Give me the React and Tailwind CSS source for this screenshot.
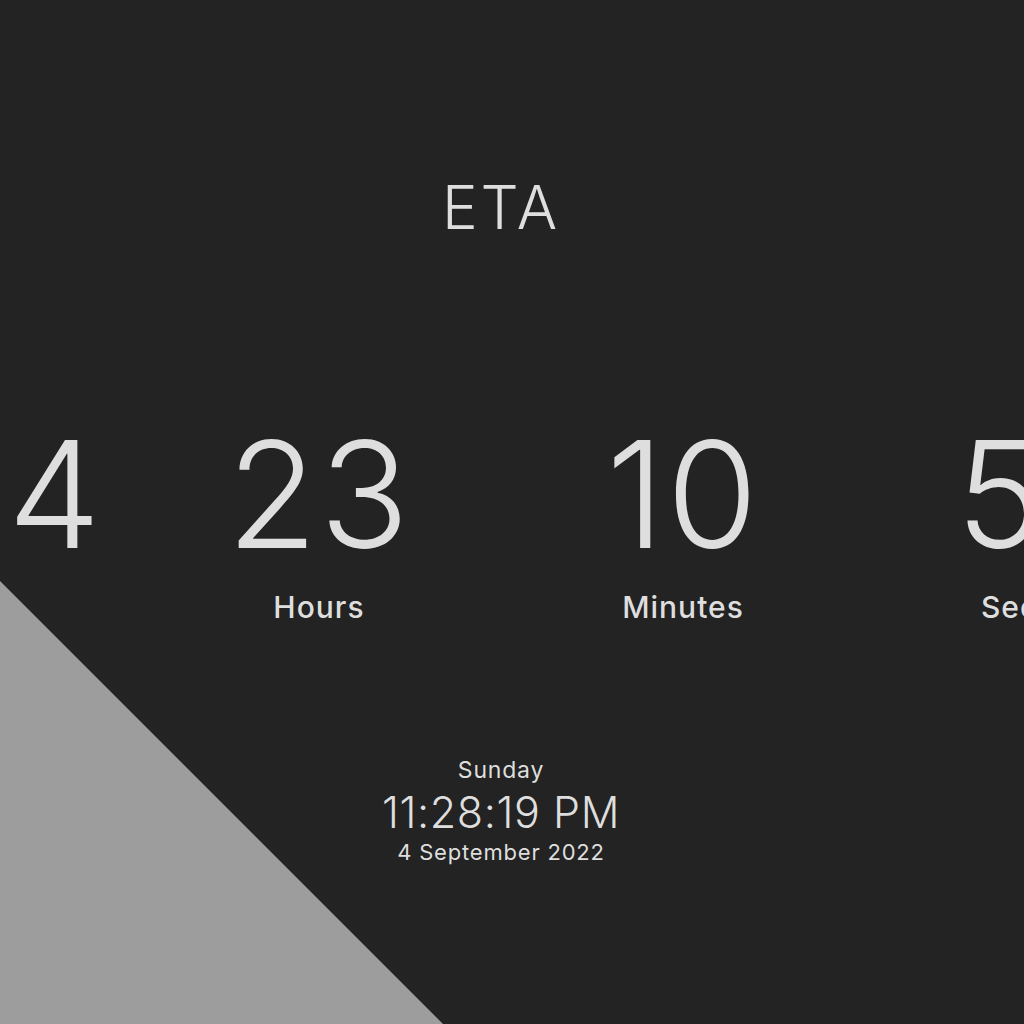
export default function App() {
  const cols = [
    { v: "124", l: "Days", extra: "ml-[50px]" },
    { v: "23", l: "Hours", extra: "" },
    { v: "10", l: "Minutes", extra: "" },
    { v: "52", l: "Seconds", extra: "" },
  ];
  return (
    <div
      className="relative h-screen w-full overflow-hidden bg-[#232323] text-[#dedede]"
      style={{ fontFamily: "Inter, 'Noto Sans', sans-serif" }}
    >
      <svg
        className="absolute left-0 bottom-0 w-[443px] h-[443px]"
        viewBox="0 0 443 443"
      >
        <polygon points="0,0 0,443 443,443" fill="#9d9d9d" />
      </svg>
      <div className="relative flex w-[1002px] flex-col items-center">
        <h1 className="mt-[177px] text-[60px] font-light leading-none tracking-[3px]">ETA</h1>
        <div className="mt-[184px] flex w-full justify-center">
          {cols.map((c) => (
            <div key={c.l} className="flex w-[364px] shrink-0 flex-col items-center">
              <div className={`text-[148px] font-light leading-none tracking-[2px] ${c.extra}`}>{c.v}</div>
              <div className="mt-[23px] text-[30px] font-medium leading-none tracking-[1px]">{c.l}</div>
            </div>
          ))}
        </div>
        <div className="mt-[137px] flex flex-col items-center">
          <div className="text-[23px] font-normal leading-none tracking-[0.8px]">Sunday</div>
          <div className="mt-[9px] text-[43px] font-light leading-none tracking-[0.6px]">11:28:19 PM</div>
          <div className="mt-[7px] text-[22px] font-normal leading-none tracking-[0.8px]">4 September 2022</div>
        </div>
      </div>
    </div>
  );
}
